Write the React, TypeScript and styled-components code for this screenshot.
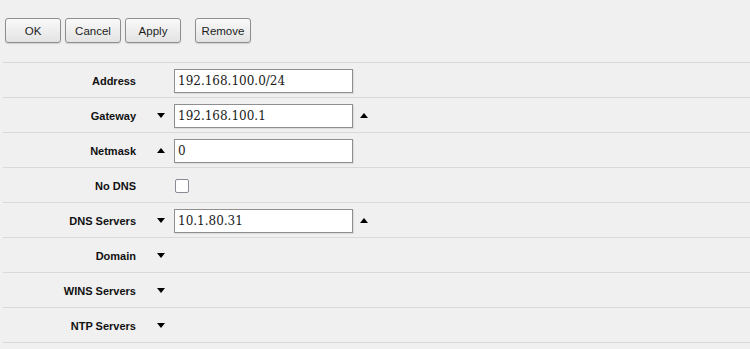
import React from "react";
import styled, { createGlobalStyle } from "styled-components";

const Global = createGlobalStyle`
  html, body { margin: 0; padding: 0; background: #f0f0f0; }
  body { font-family: "Liberation Sans", Arial, sans-serif; }
`;

const Page = styled.div`
  width: 750px;
  height: 349px;
  background: #f0f0f0;
  overflow: hidden;
`;

const Toolbar = styled.div`
  display: flex;
  align-items: center;
  padding: 18px 0 0 5px;
  height: 25px;
  margin-bottom: 20px;
`;

const Button = styled.button<{ $gapLeft?: number }>`
  box-sizing: border-box;
  width: 56px;
  height: 25px;
  margin-left: ${(p) => p.$gapLeft ?? 0}px;
  padding: 0;
  border: 1px solid #8e8e8e;
  border-radius: 3px;
  background: linear-gradient(#f9f9f9, #e3e3e3);
  box-shadow: 0 1px 1px rgba(0, 0, 0, 0.12);
  font-family: "Liberation Sans", Arial, sans-serif;
  font-size: 11.5px;
  color: #1c1c1c;
`;

const Form = styled.div`
  margin-left: 3px;
  margin-top: -1px;
  border-bottom: 1px solid #d9d9d9;
`;

const Row = styled.div`
  display: grid;
  grid-template-columns: 133px 38px 179px auto;
  align-items: center;
  height: 34px;
  border-top: 1px solid #d9d9d9;
`;

const Label = styled.div`
  text-align: right;
  font-weight: bold;
  font-size: 11px;
  color: #111;
  padding-top: 1px;
`;

const ArrowCell = styled.div`
  display: flex;
  align-items: center;
  padding-left: 21px;
`;

const Tri = styled.span<{ $up?: boolean }>`
  display: block;
  width: 0;
  height: 0;
  border-left: 4.5px solid transparent;
  border-right: 4.5px solid transparent;
  ${(p) =>
    p.$up
      ? "border-bottom: 5px solid #000; margin-top: 0;"
      : "border-top: 5px solid #000; margin-top: 1px;"}
`;

const TrailCell = styled.div`
  display: flex;
  align-items: center;
  padding-left: 7px;
  padding-top: 1px;
`;

const Input = styled.input`
  box-sizing: border-box;
  width: 179px;
  height: 24px;
  margin: 1px 0 0 0;
  padding: 0 3px;
  border: 1px solid #8f8f8f;
  background: #fff;
  box-shadow: 1px 1px 1px rgba(0, 0, 0, 0.08);
  font-family: "DejaVu Serif", serif;
  font-size: 12px;
  color: #1a1a1a;
  outline: none;
`;

const Check = styled.span`
  display: block;
  box-sizing: border-box;
  width: 14px;
  height: 14px;
  margin: 2px 0 0 1px;
  border: 1px solid #8a8a96;
  border-radius: 2px;
  background: #fff;
`;

type Field = {
  label: string;
  lead?: "down" | "up";
  value?: string;
  trail?: boolean;
  check?: boolean;
};

const fields: Field[] = [
  { label: "Address", value: "192.168.100.0/24" },
  { label: "Gateway", lead: "down", value: "192.168.100.1", trail: true },
  { label: "Netmask", lead: "up", value: "0" },
  { label: "No DNS", check: true },
  { label: "DNS Servers", lead: "down", value: "10.1.80.31", trail: true },
  { label: "Domain", lead: "down" },
  { label: "WINS Servers", lead: "down" },
  { label: "NTP Servers", lead: "down" },
];

export default function App() {
  return (
    <Page>
      <Global />
      <Toolbar>
        <Button>OK</Button>
        <Button $gapLeft={4}>Cancel</Button>
        <Button $gapLeft={4}>Apply</Button>
        <Button $gapLeft={14}>Remove</Button>
      </Toolbar>
      <Form>
        {fields.map((f) => (
          <Row key={f.label}>
            <Label>{f.label}</Label>
            <ArrowCell>{f.lead && <Tri $up={f.lead === "up"} />}</ArrowCell>
            <div>
              {f.value !== undefined && <Input defaultValue={f.value} />}
              {f.check && <Check />}
            </div>
            <TrailCell>{f.trail && <Tri $up />}</TrailCell>
          </Row>
        ))}
      </Form>
    </Page>
  );
}
